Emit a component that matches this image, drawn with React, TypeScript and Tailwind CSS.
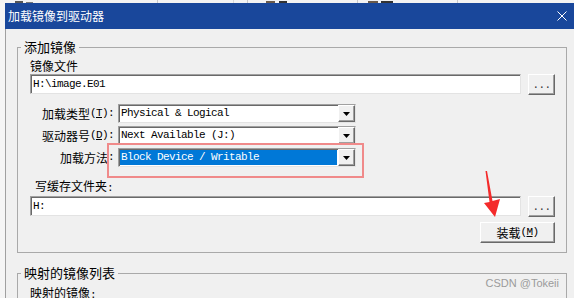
import React from "react";

const cjk = "font-['Noto_Sans_CJK_SC',sans-serif]";
const mono = "font-['Liberation_Mono','Noto_Sans_CJK_SC',monospace] text-[11px] tracking-[-0.6px]";

function DropArrow() {
  return (
    <svg width="7" height="4" viewBox="0 0 7 4">
      <polygon points="0,0 7,0 3.5,4" fill="#000" />
    </svg>
  );
}

function Combo({ value, selected }: { value: string; selected?: boolean }) {
  return (
    <div className="flex h-[19px] w-[238px] shrink-0 border border-[#a0a0a0] border-b-[#e3e3e3] border-r-[#e3e3e3] bg-white shadow-[inset_1px_1px_0_#696969]">
      <div className="flex flex-1 p-[1px]">
        <div
          className={`flex flex-1 items-center pl-[1px] ${mono} ${
            selected ? "bg-[#0078d7] text-white" : "text-black"
          }`}
        >
          {value}
        </div>
      </div>
      <div className="flex w-[17px] items-center justify-center border border-white border-b-[#696969] border-r-[#696969] bg-[#f0f0f0] shadow-[inset_-1px_-1px_0_#a0a0a0]">
        <DropArrow />
      </div>
    </div>
  );
}

function TextField({ value }: { value: string }) {
  return (
    <div className={`flex h-[20px] w-[491px] shrink-0 items-center border border-[#a0a0a0] border-b-[#e3e3e3] border-r-[#e3e3e3] bg-white pl-[2px] shadow-[inset_1px_1px_0_#696969] ${mono} text-black`}>
      {value}
    </div>
  );
}

function DotsButton() {
  return (
    <div className={`flex h-[21px] w-[27px] shrink-0 items-end justify-center border border-white border-b-[#696969] border-r-[#696969] bg-[#f0f0f0] pb-[2px] shadow-[inset_-1px_-1px_0_#a0a0a0] ${mono} leading-[14px] text-[#333]`}>
      ...
    </div>
  );
}

function Label({ text, hot }: { text: string; hot?: string }) {
  return (
    <div className="flex w-[84px] shrink-0 items-center justify-end">
      <span className={`${cjk} text-[12px] leading-[16px] text-black`}>{text}</span>
      {hot ? (
        <span className={`${mono} text-black`}>
          (<span className="underline">{hot}</span>):
        </span>
      ) : (
        <span className={`${mono} text-black`}>:</span>
      )}
    </div>
  );
}

export default function App() {
  return (
    <div className="relative flex h-[298px] w-[574px] flex-col overflow-hidden bg-[#f5f5f5] text-black">
      {/* background window sliver (bottom edge of a file list) */}
      <div className="flex h-[3px] shrink-0 items-end overflow-hidden bg-[#f3f3f3]">
        <div className="flex h-full w-[157px] items-end gap-[3px] pl-[15px]">
          <div className="h-[2px] w-[8px] bg-[#555]" />
          <div className="h-[1px] w-[7px] bg-[#777]" />
        </div>
        <div className="h-full w-[76px] border-l border-[#c8c8c8]" />
        <div className="h-full w-[14px] border-l border-[#d8d8d8]" />
        <div className="flex h-full w-[110px] items-end gap-[4px] border-l border-[#c8c8c8] pl-[18px]">
          <div className="h-[2px] w-[9px] bg-[#6a5a4a]" />
          <div className="h-[2px] w-[8px] bg-[#333]" />
        </div>
        <div className="flex h-full w-[100px] items-end gap-[3px] border-l border-[#c8c8c8] pl-[10px]">
          <div className="h-[2px] w-[10px] bg-[#6a5a4a]" />
          <div className="h-[2px] w-[12px] bg-[#333]" />
        </div>
        <div className="h-full flex-1 border-l border-[#c8c8c8]" />
      </div>

      <div className="flex min-h-0 flex-1">
        <div className="w-[5px] shrink-0 bg-[#f5f5f5]" />
        <div className="flex min-w-0 flex-1 flex-col">
          {/* title bar */}
          <div className="flex h-[26px] shrink-0 items-center justify-between bg-[#19479b] pl-[3px] pr-[7px]">
            <span className={`${cjk} text-[12px] leading-[16px] text-white`}>加载镜像到驱动器</span>
            <svg width="10" height="10" viewBox="0 0 10 10">
              <path d="M0.5 0.5L9.5 9.5M9.5 0.5L0.5 9.5" stroke="#fff" strokeWidth="1" />
            </svg>
          </div>

          {/* body */}
          <div className="min-h-0 flex-1 overflow-hidden border-l border-[#a0a0a0] bg-[#f0f0f0] pl-[11px]">
            <fieldset className="mt-[9px] w-[550px] border border-[#a9a9a9]">
              <legend className={`ml-[3px] px-[3px] ${cjk} text-[13px] leading-[18px]`}>添加镜像</legend>
              <div className="pb-[9px] pl-[12px] pr-[11px]">
                <div className={`mt-[2px] h-[16px] ${cjk} text-[12px] leading-[16px]`}>镜像文件</div>
                <div className="flex items-start gap-[7px]">
                  <TextField value={"H:\\image.E01"} />
                  <DotsButton />
                </div>

                <div className="mt-[9px] flex flex-col gap-[3px]">
                  <div className="flex items-center gap-[4px]">
                    <Label text="加载类型" hot="T" />
                    <Combo value="Physical & Logical" />
                  </div>
                  <div className="flex items-center gap-[4px]">
                    <Label text="驱动器号" hot="D" />
                    <Combo value="Next Available (J:)" />
                  </div>
                  <div className="flex items-center gap-[4px]">
                    <Label text="加载方法" />
                    <Combo value="Block Device / Writable" selected />
                  </div>
                </div>

                <div className={`ml-[5px] mt-[11px] h-[16px] ${cjk} text-[12px] leading-[16px]`}>
                  写缓存文件夹<span className={mono}>:</span>
                </div>
                <div className="mt-[2px] flex items-start gap-[7px]">
                  <TextField value="H:" />
                  <DotsButton />
                </div>

                <div className="mt-[5px] flex justify-end">
                  <div className="flex h-[21px] w-[75px] items-center justify-center border border-white border-b-[#696969] border-r-[#696969] bg-[#f0f0f0] shadow-[inset_-1px_-1px_0_#a0a0a0]">
                    <span className={`${cjk} text-[12px] leading-[16px]`}>装载</span>
                    <span className={mono}>
                      (<span className="underline">M</span>)
                    </span>
                  </div>
                </div>
              </div>
            </fieldset>

            <fieldset className="mt-[11px] w-[550px] border border-[#a9a9a9]">
              <legend className={`ml-[3px] px-[3px] ${cjk} text-[13px] leading-[18px]`}>映射的镜像列表</legend>
              <div className="pl-[12px]">
                <div className={`mt-[3px] h-[16px] ${cjk} text-[12px] leading-[16px]`}>
                  映射的镜像<span className={mono}>:</span>
                </div>
                <div className="h-[20px]" />
              </div>
            </fieldset>
          </div>
        </div>
      </div>

      {/* annotation: red highlight box */}
      <div className="absolute left-[107px] top-[143px] h-[35px] w-[257px] border-2 border-[#f08a8a]" />

      {/* annotation: red arrow */}
      <svg className="absolute left-[480px] top-[168px]" width="25" height="52" viewBox="480 168 25 52">
        <polygon
          points="485.5,171 487,171 492.5,201 500,199 495,217 484,203 489.5,202"
          fill="#f42a2a"
        />
      </svg>

      {/* watermark */}
      <div className="absolute right-[15px] top-[276px] font-['Liberation_Sans',Arial,sans-serif] text-[11px] leading-[14px] text-[#9b9b9b]">
        CSDN @Tokeii
      </div>
    </div>
  );
}
